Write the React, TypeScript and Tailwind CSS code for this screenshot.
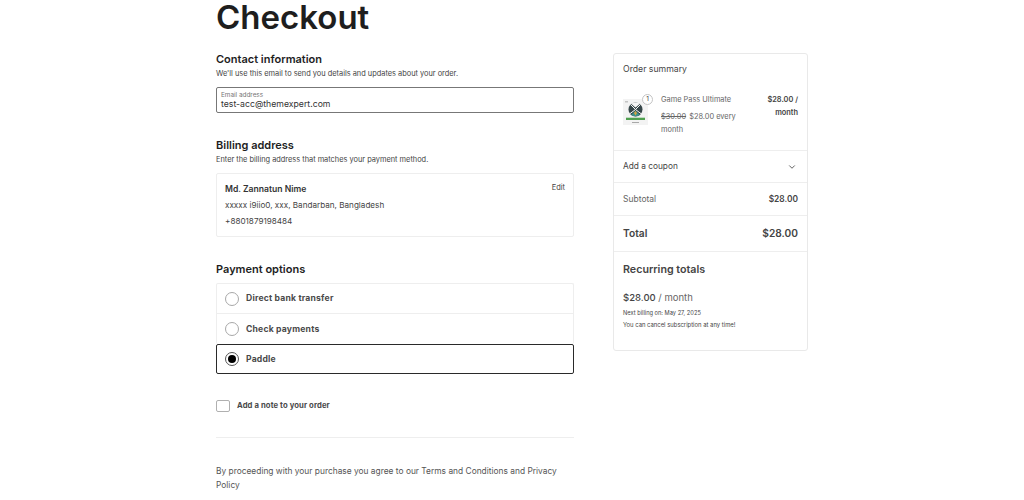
import type { ReactNode } from 'react'
import { ChevronDown } from 'lucide-react'

function SectionTitle({ title, note }: { title: string; note?: string }) {
  return (
    <div>
      <h2 className="text-[11px] font-semibold leading-[16px] text-[#1e1e1e]">{title}</h2>
      {note && <p className="mt-px text-[7.4px] leading-[12px] text-[#444444]">{note}</p>}
    </div>
  )
}

function PaymentRow({ label, selected = false }: { label: string; selected?: boolean }) {
  return (
    <div className={selected ? 'flex h-[30px] items-center gap-[7px] rounded-[2px] border border-[#2a2a2a] pl-[8px]' : 'flex h-[30px] items-center gap-[7px] border-b border-[#eeeeee] pl-[8px] last:border-b-0'}>
      <span className={selected ? 'flex h-[14px] w-[14px] items-center justify-center rounded-full border border-[#555555] bg-white' : 'flex h-[14px] w-[14px] items-center justify-center rounded-full border border-[#a8a8a8] bg-white'}>
        {selected && <span className="h-[8px] w-[8px] rounded-full bg-black" />}
      </span>
      <span className="text-[8.6px] font-bold tracking-[0.2px] text-[#4a4a4a]">{label}</span>
    </div>
  )
}

function GamePassArt() {
  return (
    <svg viewBox="0 0 25 26" className="h-[26px] w-[25px]">
      <rect width="25" height="26" fill="#f3f3f3" />
      <rect x="2" y="2" width="3" height="1.5" fill="#c4c4c4" />
      <circle cx="12.5" cy="10.5" r="7" fill="#37474a" />
      <path d="M8 4.8 Q12.5 2.2 17 4.8 L12.5 8.4 Z" fill="#f6f6f6" />
      <path d="M7.5 5.5 L12.5 10.5 L17.5 5.5 M6.5 15 L12.5 10.5 L18.5 15" fill="none" stroke="#f6f6f6" strokeWidth="1" />
      <path d="M8 16 L12.5 11.5 L17 16 Q12.5 18.5 8 16 Z" fill="#3f8f8a" />
      <path d="M11 14 L12.5 12 L14 14 L12.5 16.5 Z" fill="#d9a441" />
      <rect x="3" y="18.7" width="19" height="2.3" fill="#4fa04f" />
      <rect x="9" y="23" width="7" height="1" fill="#a8a8a8" />
    </svg>
  )
}

function SummaryRow({ children, className }: { children: ReactNode; className: string }) {
  return <div className={`border-t border-[#eeeeee] px-[9px] ${className}`}>{children}</div>
}

export default function App() {
  return (
    <div className="h-[500px] w-[1024px] overflow-hidden bg-white font-['Inter',sans-serif] text-[#444444]">
      <div className="flex pl-[216px]">
        <main className="w-[358px]">
          <h1 className="text-[33px] font-semibold leading-[34px] text-[#1e1e1e]">Checkout</h1>

          <section className="mt-[17px]">
            <SectionTitle title="Contact information" note="We'll use this email to send you details and updates about your order." />
            <div className="mt-[7px] flex h-[26px] flex-col justify-center rounded-[2px] border border-[#777777] px-[4px]">
              <span className="text-[6.4px] leading-[8px] text-[#757575]">Email address</span>
              <span className="text-[8.7px] leading-[11px] text-[#333333]">test-acc@themexpert.com</span>
            </div>
          </section>

          <section className="mt-[24px]">
            <SectionTitle title="Billing address" note="Enter the billing address that matches your payment method." />
            <div className="mt-[7px] flex h-[64px] justify-between rounded-[2px] border border-[#eeeeee] px-[8px] pt-[7px]">
              <div className="text-[8.15px] leading-[16px]">
                <p className="text-[8.6px] font-semibold text-[#333333]">Md. Zannatun Nime</p>
                <p>xxxxx i9iio0, xxx, Bandarban, Bangladesh</p>
                <p>+8801879198484</p>
              </div>
              <span className="text-[7.5px] leading-[13px]">Edit</span>
            </div>
          </section>

          <section className="mt-[24px]">
            <SectionTitle title="Payment options" />
            <div className="mt-[6px] rounded-[2px] border border-b-0 border-[#eeeeee]">
              <PaymentRow label="Direct bank transfer" />
              <PaymentRow label="Check payments" />
            </div>
            <PaymentRow label="Paddle" selected />
          </section>

          <label className="mt-[26px] flex items-center gap-[7px]">
            <span className="h-[12px] w-[14px] rounded-[2px] border border-[#b0b0b0]" />
            <span className="text-[7.7px] font-bold tracking-[0.1px] text-[#4a4a4a]">Add a note to your order</span>
          </label>

          <hr className="mt-[25px] border-[#eeeeee]" />

          <p className="mt-[26px] text-[8.4px] leading-[14px] text-[#555555]">
            By proceeding with your purchase you agree to our Terms and Conditions and Privacy Policy
          </p>
        </main>

        <aside className="ml-[39px] mt-[53px] h-[298px] w-[195px] rounded-[3px] border border-[#e9e9e9]">
          <p className="px-[9px] pt-[9px] text-[8.7px] leading-[12px]">Order summary</p>

          <div className="mt-[18px] flex h-[57px] px-[9px]">
            <div className="relative mt-[6px] h-[26px] w-[25px]">
              <GamePassArt />
              <span className="absolute -right-[5px] -top-[5px] flex h-[11px] w-[11px] items-center justify-center rounded-full border border-[#c4c4c4] bg-white text-[6.5px] leading-none">1</span>
            </div>
            <div className="ml-[13px] w-[85px] text-[7.4px] leading-[13px] text-[#666666]">
              <p>Game Pass Ultimate</p>
              <p className="mt-[4px]"><s>$30.00</s> <span className="ml-[1px]">$28.00 every month</span></p>
            </div>
            <p className="ml-auto w-[40px] text-right text-[7.4px] font-semibold leading-[13px]">$28.00 / month</p>
          </div>

          <SummaryRow className="flex h-[32px] items-center justify-between">
            <span className="text-[8.3px]">Add a coupon</span>
            <ChevronDown className="mr-[1px] h-[10px] w-[10px]" strokeWidth={2} />
          </SummaryRow>
          <SummaryRow className="flex h-[33px] items-center justify-between">
            <span className="text-[8.5px] text-[#666666]">Subtotal</span>
            <span className="text-[8.4px] font-semibold">$28.00</span>
          </SummaryRow>
          <SummaryRow className="flex h-[36px] items-center justify-between text-[10.2px] font-semibold">
            <span>Total</span>
            <span>$28.00</span>
          </SummaryRow>
          <SummaryRow className="pt-[11px]">
            <h3 className="text-[10.7px] font-semibold leading-[14px]">Recurring totals</h3>
            <p className="mt-[14px] text-[9.5px] leading-[14px]"><span className="font-medium">$28.00</span> <span className="text-[#666666]">/ month</span></p>
            <p className="mt-[2px] text-[5.7px] leading-[12px]">Next billing on: May 27, 2025</p>
            <p className="text-[5.9px] leading-[12px]">You can cancel subscription at any time!</p>
          </SummaryRow>
        </aside>
      </div>
    </div>
  )
}
